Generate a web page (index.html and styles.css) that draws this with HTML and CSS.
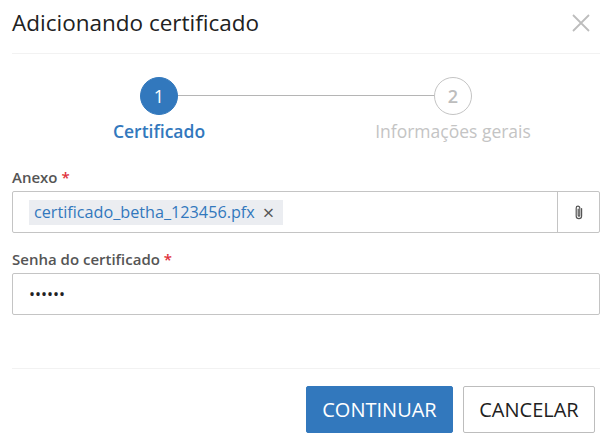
FILE: index.html
```html
<!DOCTYPE html>
<html lang="pt">
<head>
<meta charset="utf-8">
<title>Adicionando certificado</title>
<link rel="stylesheet" href="styles.css">
</head>
<body>
<div class="modal">
  <header class="head">
    <h1 class="title">Adicionando certificado</h1>
    <svg class="close" width="18" height="18" viewBox="0 0 18 18"><path d="M1 1 L17 17 M17 1 L1 17" stroke="#bdbdbd" stroke-width="1.8" fill="none"/></svg>
  </header>
  <div class="steps">
    <div class="step active">
      <div class="circle">1</div>
      <div class="step-label">Certificado</div>
    </div>
    <div class="step">
      <div class="circle">2</div>
      <div class="step-label">Informações gerais</div>
    </div>
  </div>
  <form class="form">
    <div class="field">
      <div class="label">Anexo <span class="req">*</span></div>
      <div class="input attach">
        <div class="attach-main">
          <span class="tag">certificado_betha_123456.pfx<span class="tag-x">×</span></span>
        </div>
        <div class="attach-btn">
          <svg width="10" height="15" viewBox="0 0 10 15"><path d="M7.6 3.6 V11 a2.7 2.7 0 0 1 -5.4 0 V3 a1.8 1.8 0 0 1 3.6 0 V10.4 a0.8 0.8 0 0 1 -1.6 0 V4" stroke="#555" stroke-width="1.2" fill="none" stroke-linecap="round"/></svg>
        </div>
      </div>
    </div>
    <div class="field">
      <div class="label">Senha do certificado <span class="req">*</span></div>
      <div class="input pass">••••••</div>
    </div>
  </form>
  <footer class="foot">
    <button class="btn primary" type="button">CONTINUAR</button>
    <button class="btn" type="button">CANCELAR</button>
  </footer>
</div>
</body>
</html>
```
FILE: styles.css
```css
* { box-sizing: border-box; }
html, body { margin: 0; padding: 0; background: #fff; }
body { font-family: "Open Sans", sans-serif; color: #212121; width: 613px; height: 444px; overflow: hidden; }
.modal { padding: 0 13px 0 12px; }
.head { height: 54px; border-bottom: 1px solid #f2f2f2; display: flex; align-items: center; justify-content: space-between; padding-bottom: 7px; }
.title { margin: 0; font-size: 22.5px; font-weight: 400; line-height: 28px; color: #212121; }
.close { margin-right: 10px; }
.steps { display: grid; grid-template-columns: 294px 294px; padding-top: 23px; height: 112px; }
.step { position: relative; display: flex; flex-direction: column; align-items: center; }
.circle { width: 38px; height: 38px; border-radius: 50%; border: 1px solid #c4c4c4; color: #bdbdbd; font-size: 18px; font-weight: 600; display: flex; align-items: center; justify-content: center; background: #fff; position: relative; z-index: 1; }
.step.active::after { content: ""; position: absolute; left: 147px; width: 294px; top: 18px; height: 1px; background: #b5b5b5; }
.step.active .circle { background: #3278bd; border-color: #3278bd; color: #fff; font-weight: 500; }
.step-label { margin-top: 5px; font-size: 17.5px; line-height: 22px; font-weight: 500; color: #c4c4c4; }
.step.active .step-label { color: #3278bd; font-weight: 600; }
.form { display: flex; flex-direction: column; gap: 15px; }
.label { font-size: 15px; line-height: 20px; font-weight: 600; color: #555; margin-bottom: 4px; height: 21px; padding-top: 1px; }
.req { color: #e0303a; }
.input { height: 42px; width: 588px; border: 1px solid #c4c4c4; border-radius: 2px; background: #fff; }
.attach { display: flex; }
.attach-main { flex: 1; display: flex; align-items: center; padding-left: 16px; }
.tag { background: #ebedf1; color: #3278bd; font-size: 16.2px; line-height: 25px; height: 25px; padding: 0 9px 0 5px; display: inline-flex; align-items: center; }
.tag-x { color: #555; font-size: 20px; margin-left: 8px; }
.attach-btn { width: 42px; border-left: 1px solid #c4c4c4; display: flex; align-items: center; justify-content: center; }
.pass { display: flex; align-items: center; padding-left: 16px; font-size: 16px; letter-spacing: 0; color: #212121; }
.foot { margin-top: 53px; border-top: 1px solid #f2f2f2; padding: 17px 5px 0 0; display: flex; justify-content: flex-end; gap: 10px; }
.btn { height: 47px; font-family: "Open Sans", sans-serif; font-size: 20px; border-radius: 2px; border: 1px solid #bdbdbd; background: #fff; color: #212121; width: 132px; padding: 0; }
.btn.primary { width: 147px; background: #3278bd; border-color: #3278bd; color: #fff; }
```
